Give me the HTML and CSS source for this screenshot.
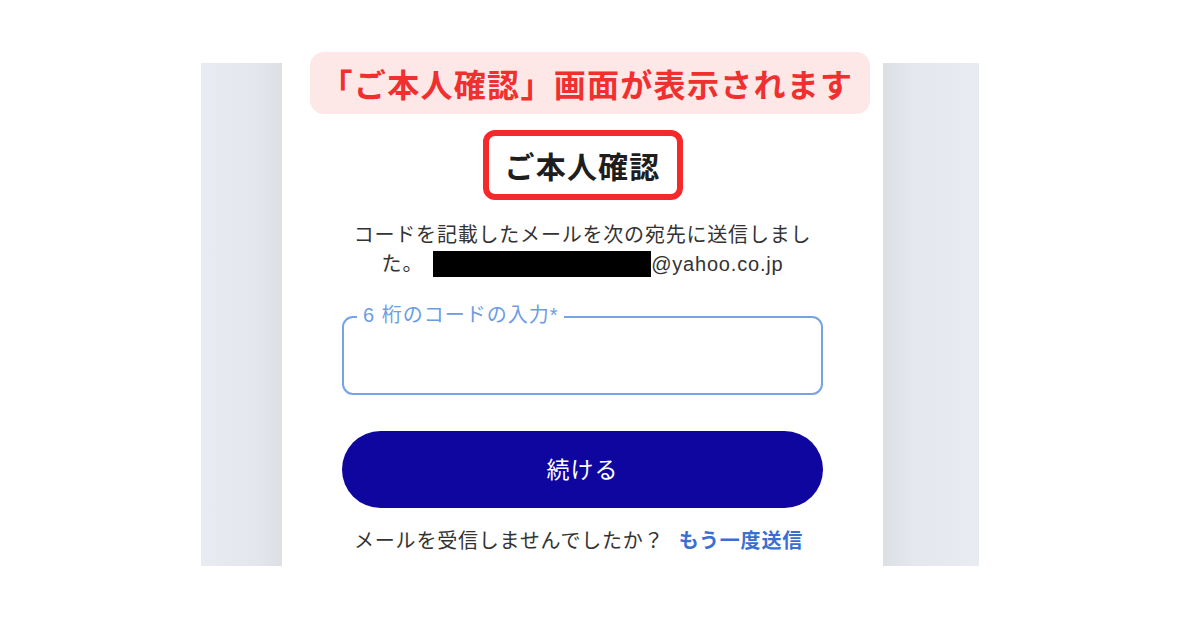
FILE: index.html
```html
<!DOCTYPE html>
<html lang="ja">
<head>
<meta charset="utf-8">
<link rel="stylesheet" href="styles.css">
</head>
<body>
<div class="shot">
  <div class="side side-left"></div>
  <div class="card">
    <div class="title-box"><h1 class="title">ご本人確認</h1></div>
    <p class="desc">コードを記載したメールを次の宛先に送信しました。<span class="redact"></span>@yahoo.co.jp</p>
    <div class="field">
      <span class="field-label">6 桁のコードの入力*</span>
    </div>
    <div class="btn">続ける</div>
    <p class="resend">メールを受信しませんでしたか？ <span class="link">もう一度送信</span></p>
  </div>
  <div class="side side-right"></div>
  <div class="callout">「ご本人確認」画面が表示されます</div>
</div>
</body>
</html>
```
FILE: styles.css
```css
html, body {
  margin: 0;
  padding: 0;
  background: #ffffff;
}
body {
  width: 1200px;
  height: 630px;
  overflow: hidden;
  font-family: "Liberation Sans", "Noto Sans CJK JP", sans-serif;
  color: #333333;
}
.shot {
  position: relative;
  margin: 63px 0 0 201px;
  width: 778px;
  height: 503px;
  display: grid;
  grid-template-columns: 81px 601px 96px;
}
.side-left {
  background: linear-gradient(to right, #e8ebf1, #e3e6ec 70%, #dcdfe4);
}
.side-right {
  background: linear-gradient(to right, #dcdfe4, #e4e7ed 30%, #e8ebf0);
}
.card {
  background: #ffffff;
  padding: 0 60px;
  display: flex;
  flex-direction: column;
  align-items: center;
}
.title-box {
  margin-top: 67px;
  width: 200px;
  height: 70px;
  box-sizing: border-box;
  border: 6px solid #f5282a;
  border-radius: 12px;
  display: flex;
  align-items: center;
  justify-content: center;
}
.title {
  margin: 0;
  font-size: 30px;
  font-weight: 700;
  letter-spacing: 1.2px;
  color: #1e1e1e;
  font-family: "Noto Sans CJK JP", sans-serif;
  line-height: 1;
}
.desc {
  margin: 21px 0 0;
  width: 100%;
  text-align: center;
  font-size: 20px;
  line-height: 29px;
  letter-spacing: 0.8px;
  color: #333333;
}
.redact {
  display: inline-block;
  width: 218px;
  height: 26px;
  background: #000000;
  vertical-align: -6px;
  margin-left: 10px;
}
.field {
  position: relative;
  margin-top: 37px;
  width: 100%;
  height: 79px;
  box-sizing: border-box;
  border: 2px solid #74a3e8;
  border-radius: 11px;
}
.field-label {
  position: absolute;
  left: 13px;
  top: -15px;
  padding: 0 6px;
  background: #ffffff;
  font-size: 20px;
  line-height: 24px;
  letter-spacing: 1px;
  color: #6c9ce4;
}
.btn {
  margin-top: 36px;
  width: 100%;
  height: 77px;
  border-radius: 39px;
  background: #0f06a0;
  color: #ffffff;
  font-size: 23px;
  letter-spacing: 1px;
  display: flex;
  align-items: center;
  justify-content: center;
  padding-bottom: 3px;
  box-sizing: border-box;
}
.resend {
  margin: 19px 0 0;
  font-size: 20px;
  line-height: 29px;
  letter-spacing: 0.8px;
  color: #333333;
  text-align: center;
  padding-right: 8px;
}
.link {
  color: #3a6fd2;
  font-weight: 700;
  margin-left: 8px;
}
.callout {
  position: absolute;
  left: 109px;
  top: -11px;
  width: 560px;
  height: 62px;
  border-radius: 14px;
  background: #fde7e7;
  color: #f0302f;
  font-family: "Noto Sans CJK JP", sans-serif;
  font-weight: 700;
  font-size: 32px;
  letter-spacing: 1.3px;
  display: flex;
  align-items: center;
  justify-content: center;
  line-height: 1;
  box-sizing: border-box;
  padding-right: 6px;
}
```
